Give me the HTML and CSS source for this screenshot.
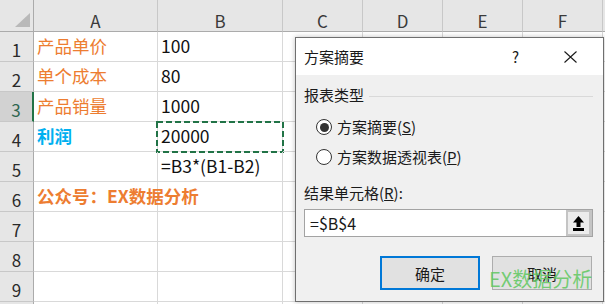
FILE: index.html
```html
<!DOCTYPE html>
<html lang="zh-CN">
<head>
<meta charset="utf-8">
<title>方案摘要</title>
<link rel="stylesheet" href="styles.css">
</head>
<body>
<div class="sheet">
  <div class="corner"><svg class="corner-tri" width="15" height="14" viewBox="0 0 15 14"><polygon points="15,0 15,14 0,14" fill="#b9b9b9"/></svg></div>
  <div class="ch">A</div><div class="ch">B</div><div class="ch">C</div><div class="ch">D</div><div class="ch">E</div><div class="ch">F</div><div class="ch"></div>

  <div class="rh">1</div><div class="c orange">产品单价</div><div class="c">100</div><div class="c"></div><div class="c"></div><div class="c"></div><div class="c"></div><div class="c"></div>
  <div class="rh">2</div><div class="c orange">单个成本</div><div class="c">80</div><div class="c"></div><div class="c"></div><div class="c"></div><div class="c"></div><div class="c"></div>
  <div class="rh rh-active">3</div><div class="c orange">产品销量</div><div class="c">1000</div><div class="c"></div><div class="c"></div><div class="c"></div><div class="c"></div><div class="c"></div>
  <div class="rh">4</div><div class="c blue-bold">利润</div><div class="c copy-cell">20000<svg class="ants" width="128" height="32" viewBox="0 0 128 32"><rect x="1" y="1" width="126" height="30" fill="none" stroke="#217346" stroke-width="2" stroke-dasharray="6 3"/></svg></div><div class="c"></div><div class="c"></div><div class="c"></div><div class="c"></div><div class="c"></div>
  <div class="rh">5</div><div class="c"></div><div class="c">=B3*(B1-B2)</div><div class="c"></div><div class="c"></div><div class="c"></div><div class="c"></div><div class="c"></div>
  <div class="rh">6</div><div class="c orange-bold">公众号：EX数据分析</div><div class="c"></div><div class="c"></div><div class="c"></div><div class="c"></div><div class="c"></div><div class="c"></div>
  <div class="rh">7</div><div class="c"></div><div class="c"></div><div class="c"></div><div class="c"></div><div class="c"></div><div class="c"></div><div class="c"></div>
  <div class="rh">8</div><div class="c"></div><div class="c"></div><div class="c"></div><div class="c"></div><div class="c"></div><div class="c"></div><div class="c"></div>
  <div class="rh">9</div><div class="c"></div><div class="c"></div><div class="c"></div><div class="c"></div><div class="c"></div><div class="c"></div><div class="c"></div>
  <div class="rh"></div><div class="c"></div><div class="c"></div><div class="c"></div><div class="c"></div><div class="c"></div><div class="c"></div><div class="c"></div>
</div>

<div class="dialog">
  <div class="titlebar">
    <span class="title">方案摘要</span>
    <span class="help">?</span>
    <svg class="close" width="13" height="12" viewBox="0 0 13 12"><path d="M0.5 0.5 L12.5 11.5 M12.5 0.5 L0.5 11.5" stroke="#1a1a1a" stroke-width="1.1" fill="none"/></svg>
  </div>
  <div class="dbody">
    <div class="group-head"><span>报表类型</span><span class="group-line"></span></div>
    <label class="radio-row first"><span class="radio checked"></span><span>方案摘要(<u>S</u>)</span></label>
    <label class="radio-row"><span class="radio"></span><span>方案数据透视表(<u>P</u>)</span></label>
    <div class="field-label">结果单元格(<u>R</u>):</div>
    <div class="refbox">
      <span class="reftext">=$B$4</span>
      <span class="refbtn"><svg width="11" height="15" viewBox="0 0 11 15"><polygon points="5.5,0 11,6.5 7.5,6.5 7.5,11 3.5,11 3.5,6.5 0,6.5" fill="#000"/><rect x="0" y="12" width="11" height="3" fill="#000"/></svg></span>
    </div>
    <div class="buttons">
      <span class="btn default">确定</span>
      <span class="btn">取消</span>
    </div>
  </div>
  <div class="watermark">EX数据分析</div>
</div>
</body>
</html>
```

FILE: styles.css
```css
body {
  margin: 0;
  width: 605px;
  height: 304px;
  overflow: hidden;
  position: relative;
  background: #ffffff;
  font-family: "Noto Sans CJK SC", "Noto Sans", sans-serif;
}

.sheet {
  display: grid;
  grid-template-columns: 34px 124px 125px 80px 80px 80px 80px 80px;
  grid-template-rows: 32px repeat(10, 30px);
}

.sheet > div {
  box-sizing: border-box;
  border-right: 1px solid #d9d9d9;
  border-bottom: 1px solid #d9d9d9;
  white-space: nowrap;
}

.corner {
  background: #e6e6e6;
  border-right-color: #ababab !important;
  border-bottom-color: #ababab !important;
  position: relative;
}

.corner-tri {
  position: absolute;
  left: 15px;
  top: 13px;
}

.ch {
  background: #e6e6e6;
  border-right-color: #c8c8c8 !important;
  border-bottom-color: #ababab !important;
  text-align: center;
  font-size: 17px;
  line-height: 20px;
  padding-top: 11px;
  color: #3a3a3a;
}

.rh {
  background: #e6e6e6;
  border-right-color: #ababab !important;
  border-bottom-color: #c8c8c8 !important;
  text-align: center;
  font-size: 17px;
  line-height: 20px;
  padding-top: 8px;
  color: #2a2a2a;
}

.rh-active {
  background: #d2d2d2;
  color: #2e6650;
  border-right: 2px solid #217346 !important;
}

.c {
  font-size: 17.5px;
  line-height: 20px;
  padding-top: 4px;
  padding-left: 3px;
  color: #111;
  position: relative;
  overflow: visible;
}

.orange { color: #ed7d31; }
.orange-bold { color: #ed7d31; font-weight: bold; position: relative; z-index: 1; }
.blue-bold { color: #00b0f0; font-weight: bold; }

.ants {
  position: absolute;
  left: -2px;
  top: -1px;
}

/* dialog */
.dialog {
  position: absolute;
  left: 295px;
  top: 37px;
  width: 309px;
  height: 265px;
  box-sizing: border-box;
  border: 1px solid #6f6f6f;
  background: #f0f0f0;
  box-shadow: 0 0 5px rgba(0, 0, 0, 0.25);
  font-size: 15px;
  color: #1a1a1a;
  display: flex;
  flex-direction: column;
}

.titlebar {
  height: 37px;
  background: #ffffff;
  display: flex;
  align-items: center;
  padding-left: 8px;
  padding-right: 26px;
}

.title {
  line-height: 20px;
}

.help {
  margin-left: auto;
  line-height: 20px;
  margin-right: 45px;
}

.close {
  display: block;
}

.dbody {
  padding: 10px 10px 0 8px;
  display: flex;
  flex-direction: column;
}

.group-head {
  display: flex;
  align-items: center;
  line-height: 20px;
}

.group-line {
  flex: 1;
  height: 1px;
  background: #d9d9d9;
  margin-left: 5px;
  margin-top: 3px;
}

.radio-row {
  display: flex;
  align-items: center;
  line-height: 20px;
  padding-left: 12px;
  margin-top: 10px;
}

.radio-row.first {
  margin-top: 12px;
}

.radio {
  width: 16px;
  height: 16px;
  box-sizing: border-box;
  border: 1px solid #333;
  border-radius: 50%;
  background: #fff;
  margin-right: 5px;
  display: flex;
  align-items: center;
  justify-content: center;
}

.radio.checked::after {
  content: "";
  width: 9px;
  height: 9px;
  border-radius: 50%;
  background: #333;
}

.field-label {
  line-height: 20px;
  margin-top: 16px;
}

.refbox {
  margin-top: 6px;
  height: 28px;
  box-sizing: border-box;
  border: 1px solid #a3a3a3;
  background: #fff;
  display: flex;
  align-items: center;
}

.reftext {
  font-size: 16px;
  line-height: 20px;
  padding-left: 5px;
}

.refbtn {
  margin-left: auto;
  width: 26px;
  height: 26px;
  box-sizing: border-box;
  border: 2px solid #c4c4c4;
  border-right-width: 3px;
  background: #ececec;
  display: flex;
  align-items: center;
  justify-content: center;
}

.refbtn svg {
  display: block;
}

.buttons {
  margin-top: 19px;
  display: flex;
  justify-content: flex-end;
  gap: 12px;
  padding-right: 1px;
}

.btn {
  width: 100px;
  height: 34px;
  box-sizing: border-box;
  border: 1px solid #adadad;
  background: #e1e1e1;
  display: flex;
  align-items: center;
  justify-content: center;
  line-height: 20px;
  padding-top: 2px;
}

.btn.default {
  border: 2px solid #0078d7;
}

.watermark {
  position: absolute;
  left: 193px;
  top: 229px;
  font-size: 20px;
  line-height: 24px;
  color: rgba(95, 200, 95, 0.85);
  white-space: nowrap;
}
```
